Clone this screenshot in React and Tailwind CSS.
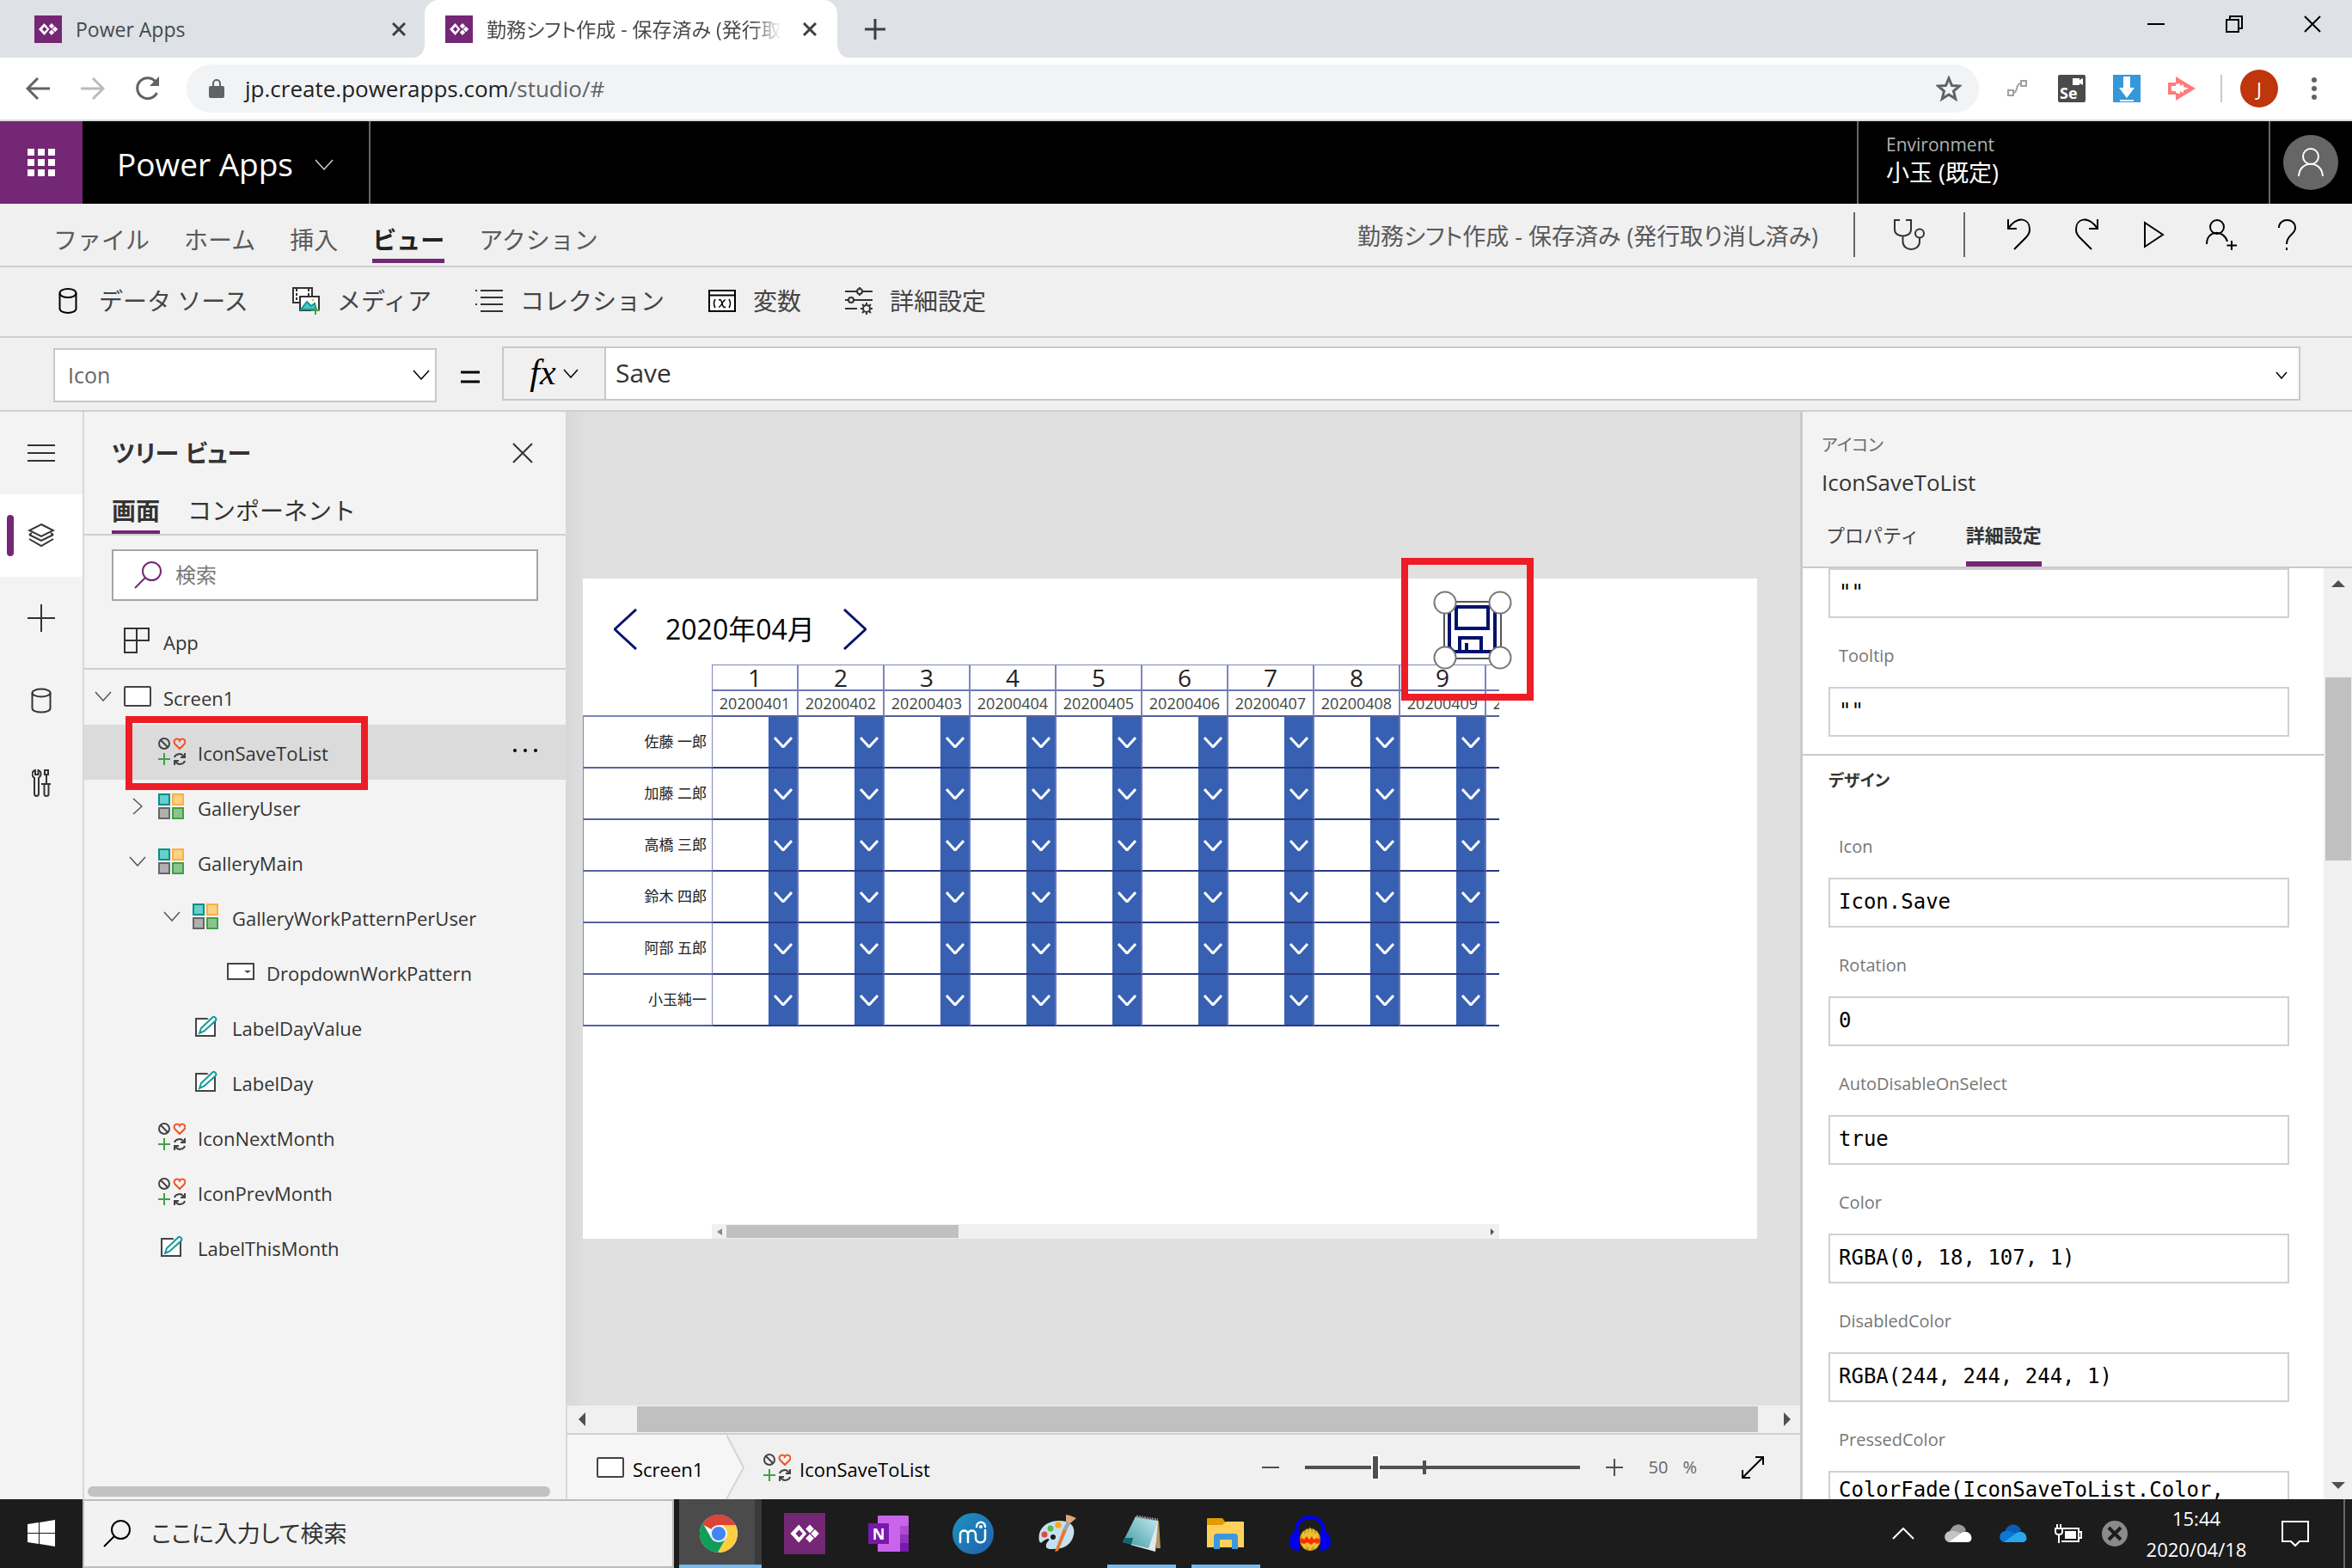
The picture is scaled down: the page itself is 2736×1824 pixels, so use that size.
import React from "react";

const range = (n) => Array.from({ length: n }, (_, i) => i);

/* ---------- generic icons ---------- */

function Svg({ w, h, vb, children, className = "", stroke = "currentColor", sw = 2, fill = "none" }) {
  return (
    <svg
      width={w}
      height={h}
      viewBox={vb || `0 0 ${w} ${h}`}
      className={`shrink-0 ${className}`}
      fill={fill}
      stroke={stroke}
      strokeWidth={sw}
      aria-hidden="true"
    >
      {children}
    </svg>
  );
}

const Chevron = ({ dir = "down", w = 20, h = 12, sw = 1.5, className = "" }) => (
  <Svg w={w} h={h} sw={sw} className={className}>
    {dir === "down" && <path d={`M1 1L${w / 2} ${h - 1}L${w - 1} 1`} />}
    {dir === "up" && <path d={`M1 ${h - 1}L${w / 2} 1L${w - 1} ${h - 1}`} />}
    {dir === "right" && <path d={`M1 1L${w - 1} ${h / 2}L1 ${h - 1}`} />}
    {dir === "left" && <path d={`M${w - 1} 1L1 ${h / 2}L${w - 1} ${h - 1}`} />}
  </Svg>
);

const Cross = ({ s = 24, sw = 2, className = "" }) => (
  <Svg w={s} h={s} sw={sw} className={className}>
    <path d={`M1 1L${s - 1} ${s - 1}M${s - 1} 1L1 ${s - 1}`} />
  </Svg>
);

const Search = ({ s = 32, sw = 2, className = "" }) => (
  <Svg w={s} h={s} vb="0 0 32 32" sw={sw} className={className}>
    <circle cx="20.5" cy="11.500" r="10.500" />
    <path d="M13 19L1 31" />
  </Svg>
);

const PowerMark = ({ s, vb = "0 0 32 32" }) => (
  <Svg w={s} h={s} vb={vb} stroke="none">
    <rect width="32" height="32" fill="#742774" />
    <path fillRule="evenodd" fill="#fff" d="M11.500 9L17.500 16L11.500 23L5 16ZM11.700 13L9 16L11.700 19L14.500 16Z" />
    <path fill="#fff" d="M20 9L23.200 12.300L20 15.600L16.800 12.300ZM20 16.400L23.200 19.700L20 23L16.800 19.700ZM24 12.700L27.200 16L24 19.300L20.800 16Z" />
  </Svg>
);

/* ---------- tree icons ---------- */

const GalleryIcon = () => (
  <Svg w={30} h={30}>
    <rect x="1" y="1" width="12" height="12" fill="#69cfcb" stroke="#038f8b" />
    <rect x="17" y="1" width="12" height="12" fill="#fbd087" stroke="#fbb040" />
    <rect x="1" y="17" width="12" height="12" fill="#b0b0b0" stroke="#666" />
    <rect x="17" y="17" width="12" height="12" fill="#8bc48d" stroke="#40a048" />
  </Svg>
);

const IconSet = () => (
  <Svg w={32} h={32} stroke="#444">
    <circle cx="7" cy="7" r="6" />
    <path d="M3 3L11 11" />
    <path stroke="#f25022" d="M25 13L19.500 7.500C17.500 5 19 1.500 22 1.500C23.500 1.500 24.500 2.300 25 3.500C25.500 2.300 26.500 1.500 28 1.500C31 1.500 32.500 5 30.500 7.500Z" />
    <path stroke="#40a048" d="M7 18V32M0 25H14" />
    <path d="M19 23C20 19 27 17 30 22.500M31 18V23H26M31 27C30 31 23 33 20 27.500M19 32V27H24" />
  </Svg>
);

const ScreenIcon = ({ h = 24 }) => (
  <Svg w={32} h={h} stroke="#444">
    <rect x="1" y="1" width="30" height={h - 2} rx="1" fill="#fff" />
  </Svg>
);

const DropdownIcon = () => (
  <Svg w={32} h={20} stroke="#444">
    <rect x="1" y="1" width="30" height="18" fill="#fff" />
    <path d="M20 9H28L24 12Z" fill="#444" stroke="none" />
  </Svg>
);

const LabelIcon = () => (
  <Svg w={26} h={26} stroke="#444">
    <rect x="1" y="4" width="22" height="20" fill="#fff" />
    <path d="M14 3H22V12Z" fill="#f3f3f3" stroke="none" />
    <path stroke="#12999a" fill="#fff" d="M5 21L7 15L20.500 2.200C22 1 25.500 3.500 24 6L10.500 18.500Z" />
  </Svg>
);

const AppIcon = () => (
  <Svg w={30} h={30} stroke="#333">
    <path d="M1 1H29V15H1ZM15 1V29H1V15" />
  </Svg>
);

const treeIcons = { gallery: GalleryIcon, icons: IconSet, screen: ScreenIcon, dropdown: DropdownIcon, label: LabelIcon };

/* ---------- browser ---------- */

function BrowserTabs() {
  return (
    <div className="flex h-[67px] shrink-0 bg-[#dee1e6] text-[23px] leading-8 text-[#45494d]">
      <div className="flex w-[480px] items-center pl-10 pr-2">
        <PowerMark s={32} />
        <span className="ml-4 flex-1">Power Apps</span>
        <button aria-label="タブを閉じる" className="text-[#3c4043]"><Cross s={16} sw={3} /></button>
      </div>
      <Svg w={14} h={67} stroke="none"><path fill="#fff" d="M14 50V67H0C9 67 14 60 14 50Z" /></Svg>
      <div className="flex w-[480px] items-center rounded-t-[16px] bg-white pl-6 pr-6">
        <PowerMark s={32} />
        <span className="ml-4 whitespace-nowrap bg-gradient-to-r from-[#45494d] from-90% to-transparent bg-clip-text text-transparent [font-feature-settings:'palt']">
          勤務シフト作成 - 保存済み (発行取
        </span>
        <button aria-label="タブを閉じる" className="ml-auto text-[#3c4043]"><Cross s={16} sw={3} /></button>
      </div>
      <Svg w={14} h={67} stroke="none"><path fill="#fff" d="M0 50V67H14C5 67 0 60 0 50Z" /></Svg>
      <button aria-label="新しいタブ" className="ml-[18px] self-center text-[#3c4043]">
        <Svg w={24} h={24} sw={3}><path d="M12 0V24M0 12H24" /></Svg>
      </button>
      <div className="ml-auto flex gap-[71px] pr-9 pt-[18px] text-black">
        <button aria-label="最小化" className="h-5"><Svg w={20} h={20}><path d="M0 10H20" /></Svg></button>
        <button aria-label="元に戻す" className="h-5"><Svg w={20} h={20}><path d="M1 5H15V19H1ZM5 5V1H19V15H15" /></Svg></button>
        <button aria-label="閉じる" className="h-5"><Cross s={20} /></button>
      </div>
    </div>
  );
}

function AddressBar() {
  return (
    <div className="flex h-[74px] shrink-0 items-center border-b-2 border-[#d9dbdf] bg-white pl-[30px] pr-[41px] text-[#5f6368]">
      <button aria-label="戻る"><Svg w={28} h={26} sw={3}><path d="M28 13H3M14 1L2 13L14 25" /></Svg></button>
      <button aria-label="進む" className="ml-9 text-[#b9bbbe]"><Svg w={28} h={26} sw={3}><path d="M0 13H25M14 1L26 13L14 25" /></Svg></button>
      <button aria-label="再読み込み" className="ml-9">
        <Svg w={28} h={28} sw={3}><path d="M24.500 19A12 12 0 1 1 23 6" /><path d="M27 0V11H16Z" fill="currentColor" stroke="none" /></Svg>
      </button>
      <div className="ml-[31px] flex h-14 flex-1 items-center rounded-full bg-[#f1f3f4] pl-[26px] pr-5">
        <Svg w={18} h={22} stroke="none"><path fillRule="evenodd" fill="#5f6368" d="M4 8V5A5 5 0 0 1 14 5V8H16Q18 8 18 10V20Q18 22 16 22H2Q0 22 0 20V10Q0 8 2 8ZM6 8H12V5A3 3 0 0 0 6 5Z" /></Svg>
        <span className="ml-6 text-[26px] leading-9 text-[#5f6368]"><span className="text-[#202124]">jp.create.powerapps.com</span>/studio/#</span>
        <button aria-label="ブックマーク" className="ml-auto">
          <Svg w={30} h={30} sw={3}><path d="M15 3L18.500 11.500L27.500 12L20.500 18L22.800 27L15 22L7.200 27L9.500 18L2.500 12L11.500 11.500Z" /></Svg>
        </button>
      </div>
      <div className="ml-[33px] flex items-center gap-8">
        <Svg w={27} h={20} stroke="#a0a0a0"><rect x="1" y="12" width="6" height="6" /><rect x="16" y="1" width="6" height="6" /><path d="M7 15C13 15 9 4 16 4" /></Svg>
        <div className="relative flex h-8 w-8 items-end rounded-[2px] bg-[#4a4a4a] pl-[2px] text-[18px] font-bold leading-[22px] text-white">
          Se
          <Svg w={12} h={8} stroke="none" fill="#fff" className="absolute right-[3px] top-1"><path d="M0 0H8V2L12 0V8L8 6V8H0Z" /></Svg>
        </div>
        <Svg w={32} h={32} stroke="none"><rect width="32" height="32" fill="#3498db" /><path fill="#fff" d="M12 2H20V15H25L16 27L7 15H12ZM8 29H24V31H8Z" /></Svg>
        <Svg w={32} h={28} stroke="none"><path fill="#ff7b7b" fillRule="evenodd" d="M0 7H9V0L32 14L9 28V21H0ZM4 11V17H9V11ZM14 8V11L18 9L18 12L24 14L18 16L18 19L14 17V20L9 19V9Z" /></Svg>
      </div>
      <span className="ml-[29px] h-8 w-[2px] bg-[#c8cacd]" />
      <button className="ml-[21px] h-11 w-11 rounded-full bg-[#bf360c] text-[22px] leading-[44px] text-white">J</button>
      <button aria-label="メニュー" className="ml-[39px]">
        <Svg w={6} h={26} stroke="none" fill="#5f6368"><circle cx="3" cy="3" r="3" /><circle cx="3" cy="13" r="3" /><circle cx="3" cy="23" r="3" /></Svg>
      </button>
    </div>
  );
}

/* ---------- suite header + ribbon ---------- */

function SuiteHeader() {
  return (
    <header className="flex h-24 shrink-0 bg-black text-white">
      <button aria-label="アプリ起動ツール" className="flex w-24 items-center justify-center bg-[#742774]">
        <Svg w={32} h={32} stroke="none" fill="#fff">
          {range(9).map((i) => <rect key={i} x={(i % 3) * 12} y={Math.floor(i / 3) * 12} width="8" height="8" />)}
        </Svg>
      </button>
      <button className="flex items-center border-r-2 border-[#666] pl-10 pr-[41px] pt-1 text-[37px] leading-[48px]">
        Power Apps
        <Chevron w={22} h={13} className="ml-[25px] text-[#ccc]" />
      </button>
      <div className="ml-auto w-[479px] border-l-2 border-[#666] pl-8 pt-3">
        <div className="text-[21px] leading-[30px] text-[#b0b0b0]">Environment</div>
        <div className="text-[27px] leading-[36px]">小玉 (既定)</div>
      </div>
      <div className="flex w-[97px] items-center border-l-2 border-[#666] pl-[15px]">
        <button aria-label="アカウント" className="flex h-16 w-16 items-center justify-center rounded-full bg-[#666]">
          <Svg w={32} h={34}><circle cx="16" cy="10" r="9" /><path d="M2 33C3 14 29 14 30 33" /></Svg>
        </button>
      </div>
    </header>
  );
}

const toolbarItems = [
  ["データ ソース", <Svg w={22} h={30} stroke="#000"><ellipse cx="11" cy="6" rx="9.500" ry="5" /><path d="M1.500 6V24C1.500 30.500 20.500 30.500 20.500 24V6" /></Svg>],
  ["メディア", <Svg w={32} h={32} stroke="#333"><rect x="1" y="1" width="22" height="17" fill="#fff" /><path d="M5 2V18M19 2V10" strokeDasharray="3 2" /><rect x="9" y="11" width="22" height="16" fill="#fff" /><path d="M10 26L17 17L22 22L26 19L28 26Z" fill="#4bc5c3" stroke="#12999a" /><circle cx="24" cy="15" r="1.500" fill="#fbb040" stroke="none" /><path d="M27 22V32M22 27H32" stroke="#40a048" /></Svg>],
  ["コレクション", <Svg w={32} h={26} stroke="#333"><path d="M0 1H2M6 1H32M6 9H32M6 17H32M6 25H32M0 17H2" /></Svg>],
  ["変数", <Svg w={32} h={26} stroke="#000"><rect x="1" y="1" width="30" height="24" fill="#fff" /><path d="M1 6.500H31" /><path d="M8 11Q5 16 8 21M24 11Q27 16 24 21M12 12C17 9 15 23 20 20M20 12C17 11 15 21 12 20" strokeWidth="1.500" /></Svg>],
  ["詳細設定", <Svg w={32} h={32} stroke="#333"><path d="M0 5H14M20 5H32M17 0V2M17 8V10M0 15H4M10 15H32M0 25H14" /><circle cx="17" cy="5" r="3" /><circle cx="7" cy="15" r="3" /><circle cx="25" cy="25" r="4" /><path d="M25 18V20M25 30V32M18 25H20M30 25H32M20 20L22 22M28 28L30 30M30 20L28 22M22 28L20 30" /></Svg>],
];

const commandIcons = [
  ["元に戻す", <path d="M1 0V11H11M1 11C12 -5 26 -1 26 12C26 16 24 19 22 21L8 35" />],
  ["やり直し", <path d="M27 0V11H17M27 11C16 -5 2 -1 2 12C2 16 4 19 6 21L20 35" />],
  ["プレビュー", <path d="M4 4L25 18L4 32Z" />],
  ["共有", <g transform="translate(-4 0)"><circle cx="14" cy="9" r="8" /><path d="M2 29C2 12 22 12 26 26M31 25V36M25.500 30.500H37" /></g>],
  ["ヘルプ", <path d="M4 10C4 -2 23 -2 23 10C23 18 13 18 13 29M13 33V36" />],
];

function Ribbon() {
  const menu = ["ファイル", "ホーム", "挿入", "ビュー", "アクション"];
  return (
    <>
      <div className="flex h-[74px] shrink-0 border-b-2 border-[#cfcfcf] bg-[#f0f0f0] pl-[62px] pr-[36px] text-[28px] leading-10 text-[#5a5a5a]">
        <nav className="flex gap-10">
          {menu.map((m) => (
            <button
              key={m}
              className={m === "ビュー" ? "h-[69px] border-b-[5px] border-[#742774] pt-5 font-bold text-[#222]" : "h-[69px] border-b-[5px] border-transparent pt-5"}
            >
              {m}
            </button>
          ))}
        </nav>
        <div className="ml-auto flex items-center">
          <span className="mr-[41px] pt-1 text-[27px] [font-feature-settings:'palt']">勤務シフト作成 - 保存済み (発行取り消し済み)</span>
          <span className="h-[52px] w-[2px] bg-[#666]" />
          <button aria-label="アプリ チェッカー" className="flex w-[126px] justify-center">
            <Svg w={38} h={36} stroke="#333"><path d="M8 1H2V12C2 22 21 22 21 12V1H15M11.500 19V26C11.500 38 31 38 31 26V21" /><circle cx="31" cy="16.500" r="5" /></Svg>
          </button>
          <span className="h-[52px] w-[2px] bg-[#666]" />
          <div className="ml-6 flex">
            {commandIcons.map(([n, p]) => (
              <button key={n} aria-label={n} className="flex w-[78px] justify-center text-black">
                <svg width="28" height="36" viewBox="0 0 28 36" overflow="visible" fill="none" stroke="currentColor" strokeWidth="2">{p}</svg>
              </button>
            ))}
          </div>
        </div>
      </div>
      <div className="flex h-[82px] shrink-0 items-center gap-[51px] border-b-2 border-[#cfcfcf] bg-[#f0f0f0] pb-[2px] pl-[63px] text-[28px] leading-10 text-[#444]">
        {toolbarItems.map(([t, icon]) => (
          <button key={t} className="flex items-center gap-5">
            <span className="flex w-8 justify-center">{icon}</span>
            {t}
          </button>
        ))}
      </div>
    </>
  );
}

function FormulaBar() {
  return (
    <div className="flex h-[86px] shrink-0 items-start border-b-2 border-[#cfcfcf] bg-[#f0f0f0] pl-[62px] pr-[60px] pt-[10px]">
      <div className="relative mt-[2px] h-[63px] w-[446px]">
        <select aria-label="プロパティ" className="h-full w-full appearance-none border-2 border-[#c8c8c8] bg-white pl-[15px] text-[25px] text-[#666]">
          <option>Icon</option>
        </select>
        <Chevron w={20} h={12} className="pointer-events-none absolute right-[8px] top-[25px] text-black" />
      </div>
      <Svg w={22} h={16} stroke="#000" sw={3} className="ml-[28px] mt-[28px]"><path d="M0 2H22M0 13H22" /></Svg>
      <button className="ml-[26px] flex h-[63px] w-[119px] items-center justify-center gap-2 border-2 border-r-0 border-[#c8c8c8] text-black">
        <span className="pb-1 font-['Liberation_Serif',serif] text-[42px] italic leading-[50px]">fx</span>
        <Chevron w={18} h={11} />
      </button>
      <div className="relative h-[63px] flex-1">
        <input aria-label="数式" defaultValue="Save" className="h-full w-full border-2 border-[#c8c8c8] bg-white pb-[2px] pl-[11px] text-[30px] text-[#333]" />
        <Chevron w={14} h={9} className="absolute right-[15px] top-[29px] text-black" />
      </div>
    </div>
  );
}

/* ---------- left side ---------- */

const railIcons = [
  ["メニュー", <Svg w={32} h={32} stroke="#333"><path d="M0 7H32M0 16H32M0 25H32" /></Svg>],
  ["ツリー ビュー", <Svg w={32} h={32} stroke="#333"><path d="M16 3L30 10L16 17L2 10ZM2 15L16 22L30 15M2 20L16 28L30 20M5 13L2 15M27 13L30 15" /></Svg>],
  ["挿入", <Svg w={32} h={32} stroke="#333"><path d="M16 0V32M0 16H32" /></Svg>],
  ["データ", <Svg w={24} h={30} stroke="#333"><ellipse cx="12" cy="6" rx="10.500" ry="4.500" /><path d="M1.500 6V24C1.500 30 22.500 30 22.500 24V6" /></Svg>],
  ["詳細ツール", <Svg w={22} h={34} stroke="#333"><path d="M3 11V29Q3 32 5.500 32T8 29V11C12 8 11 3 7.500 2V7H4V2C0 3 -1 8 3 11ZM15 2H19V7H15ZM17 7V18M11 18H22M14.500 18V30Q14.500 32 17 32T19.500 30V18" /></Svg>],
];

function Rail() {
  return (
    <nav className="flex w-[98px] shrink-0 flex-col border-r-2 border-[#d8d8d8] bg-[#f3f3f3]">
      {railIcons.map(([n, icon], i) => (
        <button key={n} aria-label={n} className={i === 1 ? "relative flex h-24 items-center justify-center bg-white" : "flex h-24 items-center justify-center"}>
          {i === 1 && <span className="absolute left-2 top-6 h-12 w-2 rounded-full bg-[#742774]" />}
          {icon}
        </button>
      ))}
    </nav>
  );
}

const indents = ["pl-[12px]", "pl-[52px]", "pl-[92px]", "pl-[132px]"];

const tree = [
  { name: "Screen1", level: 0, icon: "screen", open: "down" },
  { name: "IconSaveToList", level: 1, icon: "icons", selected: true },
  { name: "GalleryUser", level: 1, icon: "gallery", open: "right" },
  { name: "GalleryMain", level: 1, icon: "gallery", open: "down" },
  { name: "GalleryWorkPatternPerUser", level: 2, icon: "gallery", open: "down" },
  { name: "DropdownWorkPattern", level: 3, icon: "dropdown" },
  { name: "LabelDayValue", level: 2, icon: "label" },
  { name: "LabelDay", level: 2, icon: "label" },
  { name: "IconNextMonth", level: 1, icon: "icons" },
  { name: "IconPrevMonth", level: 1, icon: "icons" },
  { name: "LabelThisMonth", level: 1, icon: "label" },
];

function TreeRow({ name, level, icon, open, selected }) {
  const Icon = treeIcons[icon];
  return (
    <li className={selected ? "relative flex h-16 items-center bg-[#dbdbdb] pr-8" : "flex h-16 items-center"}>
      <button className={`flex h-16 flex-1 items-center pb-[2px] ${indents[level]}`}>
        <span className="flex w-5 justify-center text-[#555]">
          {open === "down" && <Chevron w={20} h={12} />}
          {open === "right" && <Chevron dir="right" w={12} h={20} />}
        </span>
        <span className={icon === "label" ? "ml-[14px] flex w-8 justify-center" : "ml-[14px] flex w-8"}><Icon /></span>
        <span className="ml-[14px] pt-1">{name}</span>
      </button>
      {selected && (
        <>
          <button aria-label="その他" className="pb-1 text-black">
            <Svg w={30} h={6} stroke="none" fill="#000"><circle cx="3" cy="3" r="2" /><circle cx="15" cy="3" r="2" /><circle cx="27" cy="3" r="2" /></Svg>
          </button>
          <span className="pointer-events-none absolute -top-[10px] left-[48px] h-[86px] w-[282px] border-8 border-[#ee1c25]" />
        </>
      )}
    </li>
  );
}

function TreePanel() {
  return (
    <section className="flex w-[562px] shrink-0 flex-col border-r-2 border-[#d8d8d8] bg-[#f3f3f3] text-[22px] leading-8 text-[#333]">
      <div className="flex h-24 shrink-0 items-center justify-between pl-8 pr-[38px]">
        <h2 className="text-[28px] font-bold leading-[44px] [font-feature-settings:'palt']">ツリー ビュー</h2>
        <button aria-label="閉じる"><Cross s={24} /></button>
      </div>
      <div className="flex h-12 shrink-0 gap-8 border-b-2 border-[#cfcfcf] pl-8 text-[28px] leading-[38px]">
        <button className="h-[46px] border-b-4 border-[#742774] pb-1 font-bold">画面</button>
        <button className="h-[46px] border-b-4 border-transparent pb-1">コンポーネント</button>
      </div>
      <label className="ml-8 mr-8 mt-4 flex h-[60px] shrink-0 items-center border-2 border-[#a6a6a6] bg-white pl-6">
        <Search className="text-[#742774]" />
        <input aria-label="検索" placeholder="検索" className="ml-4 min-w-0 flex-1 bg-transparent text-[24px] outline-none placeholder:text-[#777]" />
      </label>
      <button className="flex h-20 shrink-0 items-center border-b-2 border-[#cfcfcf] pl-[46px] pt-[14px]">
        <AppIcon />
        <span className="ml-4 pt-1">App</span>
      </button>
      <ul className="flex-1">
        {tree.map((t) => <TreeRow key={t.name} {...t} />)}
      </ul>
      <div className="mb-[3px] ml-1 mr-[18px] h-3 shrink-0 rounded-full bg-[#c2c2c2]" />
    </section>
  );
}

/* ---------- canvas ---------- */

const people = ["佐藤 一郎", "加藤 二郎", "高橋 三郎", "鈴木 四郎", "阿部 五郎", "小玉純一"];
const days = range(10).map((i) => i + 1);

function Schedule() {
  return (
    <div className="w-[1066px] overflow-x-clip">
      <table className="w-[1151px] table-fixed border-separate border-spacing-0">
        <colgroup>
          <col className="w-[151px]" />
          {days.map((d) => <col key={d} className="w-[100px]" />)}
        </colgroup>
        <thead>
          <tr>
            <td className="h-[31px] border-r border-[#7d86bd] p-0" />
            {days.map((d) => (
              <th key={d} className="h-[31px] border-b-2 border-r-2 border-t border-b-[#6a76b5] border-r-[#7d86bd] border-t-[#7d86bd] p-0 text-[28px] font-normal leading-[28px] text-[#222]">
                {d}
              </th>
            ))}
          </tr>
          <tr>
            <td className="h-[30px] border-b-2 border-r border-[#7d86bd] p-0" />
            {days.map((d) => (
              <th key={d} className="h-[30px] border-b-2 border-r-2 border-b-[#54619f] border-r-[#7d86bd] p-0 text-[18px] font-normal leading-[28px] text-[#444]">
                {`202004${String(d).padStart(2, "0")}`}
              </th>
            ))}
          </tr>
        </thead>
        <tbody>
          {people.map((p) => (
            <tr key={p}>
              <th className="h-[60px] border-b-2 border-l border-r border-b-[#5662a0] border-l-[#7d86bd] border-r-[#7d86bd] p-0 pr-[6px] text-right text-[17px] font-normal leading-6 text-[#222]">{p}</th>
              {days.map((d) => (
                <td key={d} className="h-[60px] border-b-2 border-r-2 border-b-[#2b3a82] border-r-[#6b76b6] p-0">
                  <div className="flex h-[58px]">
                    <select aria-label={`${p} ${d}日`} className="w-[65px] shrink-0 appearance-none bg-white"><option /></select>
                    <span className="flex flex-1 items-center justify-center bg-[#3860b2] text-white"><Chevron w={22} h={13} sw={3} /></span>
                  </div>
                </td>
              ))}
            </tr>
          ))}
        </tbody>
      </table>
    </div>
  );
}

function SaveIcon() {
  return (
    <svg className="absolute left-[987px] top-[12px]" width="94" height="94" viewBox="0 0 94 94" fill="none" aria-label="保存">
      <rect x="15" y="15" width="66" height="66" stroke="#555" strokeWidth="2" fill="#fff" />
      <path d="M21 21H74V73H26L21 68Z" stroke="#00126b" strokeWidth="4" />
      <path d="M29 21H66V46H29Z" stroke="#00126b" strokeWidth="4" fill="#fff" />
      <path d="M33 73V57H58V73M41 71V63" stroke="#00126b" strokeWidth="4" />
      {[[16, 16], [80, 16], [16, 80], [80, 80]].map(([x, y]) => (
        <circle key={`${x}-${y}`} cx={x} cy={y} r="12.500" fill="#fff" stroke="#777" strokeWidth="2" />
      ))}
    </svg>
  );
}

function Artboard() {
  return (
    <div className="relative ml-[18px] flex h-[768px] w-[1366px] shrink-0 flex-col bg-white">
      <div className="flex h-[100px] shrink-0 items-center pl-9 pt-[18px] text-[#00126b]">
        <button aria-label="前の月"><Chevron dir="left" w={27} h={48} sw={3} /></button>
        <span className="ml-[33px] w-[174px] text-[32px] leading-[44px] text-black">2020年04月</span>
        <button aria-label="次の月" className="ml-[33px]"><Chevron dir="right" w={27} h={48} sw={3} /></button>
      </div>
      <Schedule />
      <div className="ml-[150px] mt-auto flex h-[17px] w-[916px] items-center bg-[#f0f0f0]">
        <Svg w={6} h={8} stroke="none" fill="#888" className="ml-[6px]"><path d="M6 0V8L0 4Z" /></Svg>
        <span className="ml-[5px] h-[15px] w-[270px] bg-[#c0c0c0]" />
        <Svg w={4} h={8} stroke="none" fill="#505050" className="ml-auto mr-[6px]"><path d="M0 0V8L4 4Z" /></Svg>
      </div>
      <SaveIcon />
      <span className="pointer-events-none absolute -top-[24px] left-[952px] h-[166px] w-[154px] border-8 border-[#ee1c25]" />
    </div>
  );
}

function CanvasArea() {
  return (
    <main className="flex min-w-0 flex-1 flex-col">
      <div className="flex min-h-0 flex-1 items-center overflow-hidden bg-[#e0e0e0] bg-gradient-to-r from-[#d8d8d8] to-[#e0e0e0] to-[24px]">
        <Artboard />
      </div>
      <div className="flex h-[34px] shrink-0 items-center border-b-2 border-[#d0d0d0] bg-[#f0f0f0]">
        <Svg w={8} h={16} stroke="none" fill="#505050" className="ml-[13px]"><path d="M8 0V16L0 8Z" /></Svg>
        <span className="ml-[60px] mr-[30px] h-[30px] flex-1 bg-[#c0c0c0]" />
        <Svg w={8} h={16} stroke="none" fill="#505050" className="mr-[11px]"><path d="M0 0V16L8 8Z" /></Svg>
      </div>
      <div className="flex h-[75px] shrink-0 items-center bg-[#f0f0f0] text-[22px] leading-8 text-black">
        <button className="flex h-full w-[185px] items-center gap-[10px] bg-[#f6f6f6] pl-[34px]">
          <ScreenIcon />
          <span className="pt-1">Screen1</span>
        </button>
        <Svg w={21} h={75} stroke="#d4d4d4" fill="#f6f6f6"><path d="M0 0L20 38L0 75" /></Svg>
        <button className="ml-[22px] flex items-center gap-[10px]">
          <IconSet />
          <span className="pt-1">IconSaveToList</span>
        </button>
        <div className="ml-auto flex items-center text-[#505050]">
          <button aria-label="縮小"><Svg w={20} h={20}><path d="M0 10H20" /></Svg></button>
          <div className="relative ml-[30px] flex w-80 items-center">
            <input
              type="range"
              aria-label="ズーム"
              min="0"
              max="100"
              defaultValue="25"
              className="h-[30px] w-80 appearance-none bg-transparent [&::-webkit-slider-runnable-track]:h-1 [&::-webkit-slider-runnable-track]:bg-[#505050] [&::-webkit-slider-thumb]:-mt-[13px] [&::-webkit-slider-thumb]:h-[30px] [&::-webkit-slider-thumb]:w-[10px] [&::-webkit-slider-thumb]:appearance-none [&::-webkit-slider-thumb]:border-2 [&::-webkit-slider-thumb]:border-white [&::-webkit-slider-thumb]:bg-[#505050]"
            />
            <span className="pointer-events-none absolute left-[137px] top-[7px] h-4 w-1 bg-[#505050]" />
          </div>
          <button aria-label="拡大" className="ml-[30px]"><Svg w={20} h={20}><path d="M10 0V20M0 10H20" /></Svg></button>
          <span className="ml-[30px] text-[20px] text-[#666]">50</span>
          <span className="ml-[17px] text-[20px] text-[#666]">%</span>
          <button aria-label="ウィンドウに合わせる" className="ml-[52px] mr-[42px] text-black">
            <Svg w={26} h={26}><path d="M1 25L25 1M16 1H25V10M1 16V25H10" /></Svg>
          </button>
        </div>
      </div>
    </main>
  );
}

/* ---------- property panel ---------- */

function Field({ name, value }) {
  const id = `prop-${name}`;
  return (
    <div className="flex flex-col">
      <label htmlFor={id} className="h-20 pl-3 pt-7 text-[20px] leading-8 text-[#767676]">{name}</label>
      <input id={id} defaultValue={value} className="h-[58px] border-2 border-[#d0d0d0] bg-white pb-[2px] pl-[10px] font-['DejaVu_Sans_Mono',monospace] text-[24px] text-black" />
    </div>
  );
}

function PropertyPanel() {
  return (
    <aside className="flex w-[642px] shrink-0 flex-col border-l-[3px] border-[#cacaca] bg-white">
      <div className="flex h-[182px] shrink-0 flex-col border-b-2 border-[#cacaca] bg-[#f3f3f3] pl-[22px]">
        <div className="pt-6 text-[20px] leading-[30px] text-[#6a6a6a] [font-feature-settings:'palt']">アイコン</div>
        <div className="mt-[6px] text-[26px] leading-[44px] text-[#333]">IconSaveToList</div>
        <div className="mt-auto flex gap-[54px] pl-[5px] text-[22px] leading-9 text-[#444]">
          <button className="h-[58px] border-b-[6px] border-transparent pb-[10px]">プロパティ</button>
          <button className="h-[58px] border-b-[6px] border-[#742774] pb-[10px] font-bold text-[#333]">詳細設定</button>
        </div>
      </div>
      <div className="flex min-h-0 flex-1">
        <div className="flex-1 overflow-hidden">
          <div className="flex flex-col pl-[30px] pr-10">
            <input aria-label="Text" defaultValue={'""'} className="h-[58px] border-2 border-[#d0d0d0] bg-white pb-[2px] pl-[10px] font-['DejaVu_Sans_Mono',monospace] text-[24px] text-black" />
            <Field name="Tooltip" value={'""'} />
          </div>
          <h3 className="mt-5 h-16 border-t-2 border-[#cacaca] pl-[30px] pt-[13px] text-[19px] font-bold leading-8 text-[#333] [font-feature-settings:'palt']">デザイン</h3>
          <div className="flex flex-col pl-[30px] pr-10">
            <Field name="Icon" value="Icon.Save" />
            <Field name="Rotation" value="0" />
            <Field name="AutoDisableOnSelect" value="true" />
            <Field name="Color" value="RGBA(0, 18, 107, 1)" />
            <Field name="DisabledColor" value="RGBA(244, 244, 244, 1)" />
            <label htmlFor="prop-pressed" className="h-20 pl-3 pt-7 text-[20px] leading-8 text-[#767676]">PressedColor</label>
            <textarea
              id="prop-pressed"
              rows={2}
              defaultValue="ColorFade(IconSaveToList.Color, -30%)"
              className="resize-none overflow-hidden border-2 border-[#d0d0d0] bg-white px-[10px] pt-[2px] font-['DejaVu_Sans_Mono',monospace] text-[24px] leading-[36px] text-black"
            />
          </div>
        </div>
        <div className="flex w-[33px] shrink-0 flex-col items-center bg-[#f0f0f0]">
          <Svg w={16} h={8} stroke="none" fill="#505050" className="mt-[14px]"><path d="M0 8H16L8 0Z" /></Svg>
          <span className="mt-[105px] h-[213px] w-[30px] bg-[#c0c0c0]" />
          <Svg w={16} h={8} stroke="none" fill="#505050" className="mb-3 mt-auto"><path d="M0 0H16L8 8Z" /></Svg>
        </div>
      </div>
    </aside>
  );
}

/* ---------- taskbar ---------- */

const ChromeIcon = () => (
  <Svg w={44} h={44} vb="0 0 48 48" stroke="none">
    <circle cx="24" cy="24" r="24" fill="#fff" />
    <path fill="#db4437" d="M24 24L3.200 12A24 24 0 0 1 44.800 12L45 13H24Z" />
    <path fill="#0f9d58" d="M3.200 12A24 24 0 0 0 23 48L33.500 29.500L24 24L14.500 29.500L4 11Z" />
    <path fill="#ffcd40" d="M45 13A24 24 0 0 1 23 48L33.500 29.500L30 13Z" />
    <circle cx="24" cy="24" r="11" fill="#f1f1f1" />
    <circle cx="24" cy="24" r="8.800" fill="#4285f4" />
  </Svg>
);

const OneNoteIcon = () => (
  <div className="relative">
    <Svg w={48} h={44} stroke="none">
      <rect x="11" y="1" width="36" height="42" rx="1" fill="#ca64ea" />
      <path fill="#ae4bd5" d="M37 13H47V23H37Z" />
      <path fill="#9332bf" d="M37 23H47V33H37Z" />
      <path fill="#7719aa" d="M37 33H47V43H37Z" />
      <rect y="10" width="24" height="24" rx="1" fill="#7719aa" />
    </Svg>
    <span className="absolute left-0 top-[10px] w-6 text-center text-[18px] font-bold leading-6 text-white">N</span>
  </div>
);

const MuseIcon = () => (
  <Svg w={48} h={48} stroke="#fff" sw={2.5}>
    <defs><linearGradient id="muse" x1="0" y1="0" x2="1" y2="1"><stop offset="0" stopColor="#1e93bd" /><stop offset="1" stopColor="#2060ae" /></linearGradient></defs>
    <circle cx="24" cy="24" r="24" fill="url(#muse)" stroke="none" />
    <path strokeLinecap="round" d="M9 34V25C9 19 18 19 18 25V34M18 25C18 19 27 19 27 25V29C27 36 38 36 38 29V20" />
    <path strokeLinecap="round" d="M28 16C28 9 38 9 38 16" />
    <circle cx="33" cy="16" r="2" fill="#fff" stroke="none" />
  </Svg>
);

const PaintIcon = () => (
  <Svg w={46} h={46} stroke="none">
    <path fill="#c5e0f2" d="M2 32C-1 18 10 8 25 8C38 8 44 14 42 24C40 36 30 42 14 41C8 40 9 35 13 31C15 27 8 30 4 34Z" />
    <circle cx="8" cy="24" r="3.500" fill="#e5483e" /><circle cx="15" cy="17" r="3.500" fill="#58b93c" /><circle cx="24" cy="13" r="3.800" fill="#fba81a" /><circle cx="18" cy="27" r="3" fill="#1c1c1c" />
    <path fill="#e8792a" d="M20 44L30 17L34 19L24 43Z" />
    <path fill="#9aa4ab" d="M30 17L34 9L38 11L34 19Z" />
    <path fill="#d9a877" d="M33 9L33 1L38 2L45 5L38 11Z" />
  </Svg>
);

const NotepadIcon = () => (
  <Svg w={46} h={46} stroke="none">
    <defs><linearGradient id="pad" x1="0" y1="1" x2="1" y2="0"><stop offset="0" stopColor="#3f98a5" /><stop offset="1" stopColor="#c5e9ef" /></linearGradient></defs>
    <path fill="#b39560" d="M38 8H43L45 40L40 40Z" />
    <path fill="#dfe8ec" d="M16 4L42 8L39 44L10 36Z" />
    <path fill="url(#pad)" d="M16 3L42 8L31 40L1 33Z" />
    <path fill="#12666f" d="M3 28L13 28L11 36L1 33Z" />
    <path stroke="#8a8a8a" strokeWidth="3" strokeDasharray="2 1" d="M17 3L42 7" />
  </Svg>
);

const FolderIcon = () => (
  <Svg w={44} h={36} stroke="none">
    <path fill="#e09c00" d="M0 1Q0 0 1 0H18L21 4V9H0Z" />
    <path fill="#ffd15c" d="M0 8H18L22 4H42Q43 4 43 5V34H0Z" />
    <path fill="#3c98df" d="M8 36V22Q8 18 12 18H32Q36 18 36 22V36H29V25H15V36Z" />
  </Svg>
);

const AudacityIcon = () => (
  <Svg w={48} h={42} stroke="none">
    <path stroke="#0000ee" strokeWidth="4" fill="none" d="M8 20C6 -4 42 -4 40 20" />
    <ellipse cx="24" cy="28" rx="12" ry="13" fill="#c9981e" />
    <path fill="#e8c22c" d="M14 22L16 18L18 22L20 15L22 20L24 13L26 20L28 15L30 22L32 18L34 23V34L30 39L27 36L24 41L21 36L18 39L14 34Z" />
    <path fill="#ff2a00" d="M12 28L15 26L17 28L20 24L23 28L26 24L28 28L32 26L36 28V31L32 33L29 31L25 34L21 31L17 33L12 31Z" />
    <path fill="#0000ee" d="M12 17V41Q0 41 0 30Q1 19 9 17ZM36 17V41Q48 41 48 30Q47 19 39 17Z" />
  </Svg>
);

const Cloud = ({ a, b, c }) => (
  <Svg w={32} h={22} stroke="none">
    <path fill={a} d="M6 9C9 -2 22 -2 25 7L16 14Z" />
    <path fill={b} d="M7 21C-2 21 -2 9 7 8C11 7 15 9 22 12L20 21Z" />
    <path fill={c} d="M5 21L20 10C30 4 36 20 27 21Z" />
  </Svg>
);

const apps = [
  ["Chrome", <ChromeIcon />, "active"],
  ["Power Apps", <PowerMark s={48} />],
  ["OneNote", <OneNoteIcon />],
  ["MuseScore", <MuseIcon />],
  ["ペイント", <PaintIcon />],
  ["メモ帳", <NotepadIcon />, "open"],
  ["エクスプローラー", <FolderIcon />, "open"],
  ["Audacity", <AudacityIcon />],
];

function Taskbar() {
  return (
    <footer className="flex h-20 shrink-0 bg-[#1c1c1c] text-white">
      <button aria-label="スタート" className="flex w-24 items-center justify-center">
        <Svg w={32} h={32} stroke="none" fill="#fff"><path d="M0 5L13 3V15H0ZM14 3L32 0V15H14ZM0 16H13V28L0 26ZM14 16H32V31L14 28Z" /></Svg>
      </button>
      <label className="flex w-[688px] items-center border-2 border-[#bdbdbd] bg-[#f2f2f2] pl-[22px] text-black">
        <Search sw={2} />
        <input
          aria-label="ここに入力して検索"
          placeholder="ここに入力して検索"
          className="ml-6 min-w-0 flex-1 bg-transparent text-[27px] outline-none [font-feature-settings:'palt'] placeholder:text-[#333]"
        />
      </label>
      <div className="ml-[6px] flex gap-[2px]">
        {apps.map(([n, icon, state]) => (
          <button
            key={n}
            aria-label={n}
            className={state === "active" ? "relative flex w-24 items-center justify-center border-r-8 border-[#3a3a3a] bg-[#4b4b4b] pl-1" : "relative flex w-24 items-center justify-center"}
          >
            {icon}
            {state === "active" && <span className="absolute -right-2 bottom-0 left-0 h-1 bg-[#76b9ed]" />}
            {state === "open" && <span className="absolute inset-x-2 bottom-0 h-1 bg-[#76b9ed]" />}
          </button>
        ))}
      </div>
      <div className="ml-auto flex items-center">
        <Chevron dir="up" w={26} h={14} sw={2} />
        <span className="ml-[35px]"><Cloud a="#9b9b9b" b="#c4c4c4" c="#fff" /></span>
        <span className="ml-8"><Cloud a="#0a5cb5" b="#0a78d4" c="#28a8ea" /></span>
        <Svg w={32} h={22} className="ml-8" stroke="#fff"><path d="M10 5H28V20H8M29 9H31V16H29M1 5H9V9Q9 12 5 12Q1 12 1 9ZM3 5V0M7 5V0M5 12V22" /><rect x="12" y="8" width="13" height="9" fill="#fff" stroke="none" /></Svg>
        <Svg w={32} h={32} className="ml-[22px]" stroke="none"><circle cx="16" cy="16" r="15" fill="#8a8a8a" /><path d="M9 9L23 23M23 9L9 23" stroke="#1c1c1c" strokeWidth="4" /></Svg>
        <div className="ml-[18px] w-[122px] text-center text-[22px] leading-9">
          <div>15:44</div>
          <div>2020/04/18</div>
        </div>
        <button aria-label="通知" className="ml-[38px] mr-[40px]">
          <Svg w={32} h={32}><path d="M1 2H31V25H21L16 30L11 25H1Z" /></Svg>
        </button>
        <span className="mr-[8px] h-full w-[2px] bg-[#666]" />
      </div>
    </footer>
  );
}

export default function App() {
  return (
    <div className="flex h-screen min-h-[1200px] w-full flex-col overflow-hidden bg-[#f0f0f0] font-['Open_Sans','Noto_Sans_CJK_JP',sans-serif]">
      <BrowserTabs />
      <AddressBar />
      <SuiteHeader />
      <Ribbon />
      <FormulaBar />
      <div className="flex min-h-0 flex-1">
        <Rail />
        <TreePanel />
        <CanvasArea />
        <PropertyPanel />
      </div>
      <Taskbar />
    </div>
  );
}
